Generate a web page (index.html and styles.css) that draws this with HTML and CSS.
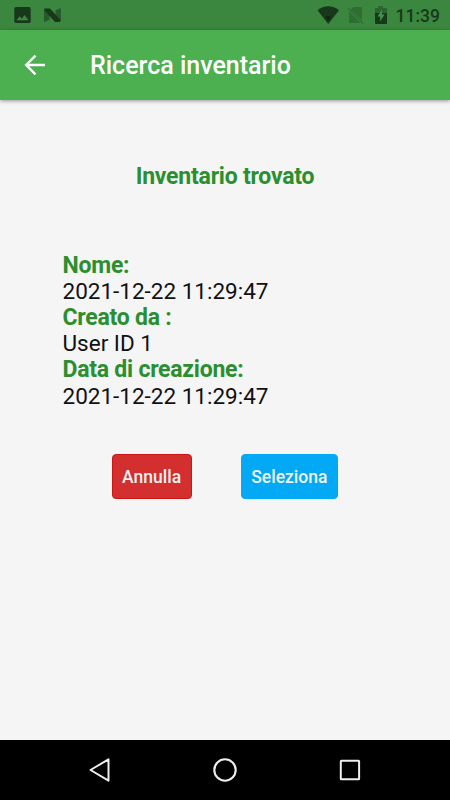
FILE: index.html
```html
<!DOCTYPE html>
<html lang="it">
<head>
<meta charset="utf-8">
<title>Ricerca inventario</title>
<link rel="stylesheet" href="styles.css">
</head>
<body>
<div class="screen">
  <div class="status">
    <svg class="notifications" width="64" height="30" viewBox="0 0 64 30">
      <path fill="#18381b" fill-rule="evenodd" d="M16 7h13a1.700 1.700 0 0 1 1.700 1.700v12.600a1.700 1.700 0 0 1-1.700 1.700H16a1.700 1.700 0 0 1-1.700-1.700V8.700A1.700 1.700 0 0 1 16 7zM16.500 20.300h12L24.700 15l-3 3.800-2.100-2.500z"/>
      <path fill="#285b2b" d="M44 10l5.500 4v6L44 22zM61 8v13l-5.500-4V10z"/>
      <path fill="#18381b" d="M44.500 8.500H50L61 20.500l-1.500 1.500H55L44 10z"/>
    </svg>
    <svg class="indicators" width="76" height="30" viewBox="316 0 76 30">
      <path fill="#18381b" d="M317.500 10.200C323.500 5 333 5 339 10.200L328.200 24z"/>
      <path fill="#0c2710" d="M325.500 17q2.700-2 5.500 0l-2.800 4z"/>
      <path fill="#2f6d33" d="M353.500 7H361a1 1 0 0 1 1 1v12.200L350.800 9.500zM349 11.300L360.500 23H350a1 1 0 0 1-1-1z"/>
      <path stroke="#2f6d33" stroke-width="1.300" d="M348 8l15 15.500"/>
      <path fill="#2b652f" d="M375 13V8h3V6h5v2h4v5z"/>
      <path fill="#18381b" d="M375 13h12v10a1 1 0 0 1-1 1h-10a1 1 0 0 1-1-1z"/>
      <path fill="#41954a" d="M382 9.500l-4.500 7h2.700v5l4.300-7h-2.500z"/>
    </svg>
    <span class="time">11:39</span>
  </div>
  <header class="appbar">
    <svg class="back" width="22" height="22" viewBox="0 0 22 22"><path fill="none" stroke="#fff" stroke-width="2.400" d="M21 11H2.500M11.500 1.700L2.200 11l9.300 9.300"/></svg>
    <h1 class="title">Ricerca inventario</h1>
  </header>
  <main class="content">
    <h2 class="heading">Inventario trovato</h2>
    <dl class="details">
      <dt>Nome:</dt><dd>2021-12-22 11:29:47</dd>
      <dt>Creato da :</dt><dd>User ID 1</dd>
      <dt>Data di creazione:</dt><dd>2021-12-22 11:29:47</dd>
    </dl>
    <div class="actions">
      <button class="button cancel">Annulla</button>
      <button class="button select">Seleziona</button>
    </div>
  </main>
  <nav class="navbar">
    <svg width="24" height="26" viewBox="0 0 24 26"><path fill="none" stroke="#eee" stroke-width="2" stroke-linejoin="round" d="M20.500 2.300v21.400L2.500 13z"/></svg>
    <svg width="26" height="26" viewBox="0 0 26 26"><circle cx="13" cy="13" r="10.700" fill="none" stroke="#eee" stroke-width="2.100"/></svg>
    <svg width="24" height="26" viewBox="0 0 24 26"><rect x="2.800" y="3.800" width="18.300" height="18.500" rx=".5" fill="none" stroke="#eee" stroke-width="2"/></svg>
  </nav>
</div>
</body>
</html>
```

FILE: styles.css
```css
* { box-sizing: border-box; }
body { margin: 0; font-family: Roboto, "Liberation Sans", sans-serif; }
h1, h2, dl, dd { margin: 0; }
.screen { width: 450px; height: 800px; display: flex; flex-direction: column; background: #f5f5f5; overflow: hidden; }
.status { height: 30px; flex: none; display: flex; align-items: center; background: #3c873f; }
.indicators { margin-left: 252px; }
.time { margin-left: 3.500px; font-size: 17.500px; font-weight: 500; line-height: 30px; color: #18381b; padding-top: 2px; }
.appbar { height: 70px; flex: none; display: flex; align-items: center; background: #4caf50; box-shadow: 0 1px 4px rgba(0, 0, 0, .4); }
.back { margin-left: 24px; }
.title { margin: 2px 0 0 44px; font-size: 25px; font-weight: 500; line-height: 30px; color: #fff; }
.content { flex: 1; display: flex; flex-direction: column; }
.heading { margin-top: 63px; text-align: center; font-size: 23px; line-height: 28px; font-weight: 700; letter-spacing: -.22px; color: #2b8f30; }
.details { margin: 61.500px 0 0 62.500px; font-size: 22.500px; line-height: 26.200px; color: #111; }
dt { font-size: 23px; font-weight: 700; letter-spacing: -.24px; color: #2b8f30; }
dd { margin-top: -1px; padding-bottom: 1px; }
.actions { display: flex; gap: 49px; margin: 44.300px 0 0 111.600px; }
.button { height: 45px; padding: 0; border: 1px solid; border-radius: 4px; font-family: inherit; font-size: 17.500px; font-weight: 500; color: #f2f2f2; }
.cancel { width: 80px; background: #d32f2f; border-color: #cc1515; }
.select { width: 97.500px; background: #03a9f4; border-color: #03a9f4; }
.navbar { height: 60px; flex: none; display: flex; align-items: center; justify-content: center; gap: 100px; background: #000; }
```
